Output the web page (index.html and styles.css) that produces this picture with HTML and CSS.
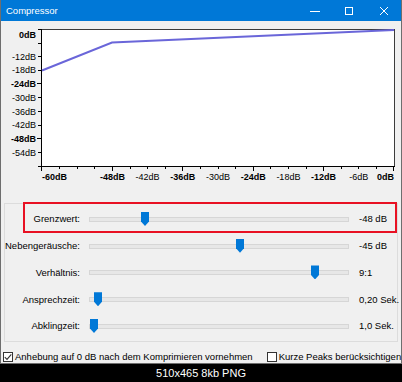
FILE: index.html
```html
<!DOCTYPE html>
<html>
<head>
<meta charset="utf-8">
<link rel="stylesheet" href="styles.css">
</head>
<body>
<div class="window">
  <div class="titlebar">
    <span class="title">Compressor</span>
    <div class="caption-btns">
      <span class="cbtn min"><svg width="10" height="10" viewBox="0 0 10 10"><path d="M0 5.5h10" stroke="#fff" stroke-width="1"/></svg></span>
      <span class="cbtn max"><svg width="10" height="10" viewBox="0 0 10 10"><rect x="1.5" y="1.5" width="7" height="7" fill="none" stroke="#fff" stroke-width="1"/></svg></span>
      <span class="cbtn close"><svg width="10" height="10" viewBox="0 0 10 10"><path d="M1 1L9 9M9 1L1 9" stroke="#fff" stroke-width="1"/></svg></span>
    </div>
  </div>

  <svg class="graph" width="400" height="169" viewBox="1 21 400 169">
    <rect x="41.5" y="29.5" width="353" height="137" fill="#fff" stroke="#3c3c3c" stroke-width="1"/>
    <path d="M41.5 29v138M41 166.5h354" stroke="#000" stroke-width="1"/>
    <path class="ticks" d="M38 29.5h3M38 43.5h3M38 56.5h3M38 70.5h3M37 83.5h4M38 97.5h3M38 111.5h3M38 125.5h3M37 138.5h4M38 152.5h3M38 166.5h3
      M41.5 167v4M59.5 167v2M77.5 167v2M94.5 167v2M112.5 167v4M130.5 167v2M147.5 167v2M165.5 167v2M182.5 167v4M200.5 167v2M218.5 167v2M235.5 167v2M253.5 167v4M270.5 167v2M288.5 167v2M306.5 167v2M323.5 167v4M341.5 167v2M358.5 167v2M376.5 167v2M393.5 167v4" stroke="#000" stroke-width="1"/>
    <polyline points="42,70.5 112,42.5 394,30" fill="none" stroke="#6a66d9" stroke-width="2"/>
    <g class="ylab">
      <text x="36" y="38.3" class="b">0dB</text>
      <text x="36" y="59.7">-12dB</text>
      <text x="36" y="73.4">-18dB</text>
      <text x="36" y="87.1" class="b">-24dB</text>
      <text x="36" y="100.8">-30dB</text>
      <text x="36" y="114.5">-36dB</text>
      <text x="36" y="128.2">-42dB</text>
      <text x="36" y="141.9" class="b">-48dB</text>
      <text x="36" y="155.6">-54dB</text>
    </g>
    <g class="xlab">
      <text x="42" y="179.5" class="b start">-60dB</text>
      <text x="112.4" y="179.5" class="b">-48dB</text>
      <text x="147.6" y="179.5">-42dB</text>
      <text x="182.8" y="179.5" class="b">-36dB</text>
      <text x="218" y="179.5">-30dB</text>
      <text x="253.2" y="179.5" class="b">-24dB</text>
      <text x="288.4" y="179.5">-18dB</text>
      <text x="323.6" y="179.5" class="b">-12dB</text>
      <text x="358.8" y="179.5">-6dB</text>
      <text x="394" y="179.5" class="b end">0dB</text>
    </g>
  </svg>

  <div class="group">
    <div class="row hl">
      <span class="lbl">Grenzwert:</span>
      <div class="slider"><span class="thumb" style="left:52px"></span></div>
      <span class="val">-48 dB</span>
    </div>
    <div class="row">
      <span class="lbl">Nebengeräusche:</span>
      <div class="slider"><span class="thumb" style="left:147px"></span></div>
      <span class="val">-45 dB</span>
    </div>
    <div class="row">
      <span class="lbl">Verhältnis:</span>
      <div class="slider"><span class="thumb" style="left:222px"></span></div>
      <span class="val">9:1</span>
    </div>
    <div class="row">
      <span class="lbl">Ansprechzeit:</span>
      <div class="slider"><span class="thumb" style="left:5px"></span></div>
      <span class="val">0,20 Sek.</span>
    </div>
    <div class="row">
      <span class="lbl">Abklingzeit:</span>
      <div class="slider"><span class="thumb" style="left:1px"></span></div>
      <span class="val">1,0 Sek.</span>
    </div>
  </div>

  <div class="checks">
    <label class="chk"><span class="box"><svg width="8" height="8" viewBox="0 0 8 8"><path d="M0.8 4.2L3 6.4L7.3 1.3" fill="none" stroke="#333" stroke-width="1.1"/></svg></span>Anhebung auf 0 dB nach dem Komprimieren vornehmen</label>
    <label class="chk"><span class="box"></span>Kurze Peaks berücksichtigen</label>
  </div>
</div>
<div class="caption">510x465 8kb PNG</div>
</body>
</html>
```

FILE: styles.css
```css
* { box-sizing: border-box; }
html, body { margin: 0; padding: 0; }
body {
  width: 402px;
  height: 382px;
  background: #000;
  overflow: hidden;
  font-family: "Liberation Sans", Arial, sans-serif;
}
.window {
  width: 402px;
  height: 364px;
  background: #f0f0f0;
  border-left: 1px solid #6e6e6e;
  border-right: 1px solid #6e6e6e;
  border-bottom: 1px solid #6e6e6e;
  display: flex;
  flex-direction: column;
  color: #000;
}
.titlebar {
  height: 21px;
  background: #0078d7;
  display: flex;
  align-items: center;
  color: #fff;
  flex: none;
}
.title {
  padding-left: 5px;
  font-size: 9.5px;
  flex: 1;
}
.caption-btns { display: flex; height: 100%; }
.cbtn {
  display: flex;
  align-items: center;
  justify-content: center;
  height: 100%;
}
.cbtn.min { width: 33px; }
.cbtn.max { width: 36px; }
.cbtn.close { width: 34px; }
.graph { display: block; flex: none; }
.graph text { font-family: "Liberation Sans", Arial, sans-serif; font-size: 9px; fill: #000; }
.graph text.b { font-weight: bold; }
.ylab text { text-anchor: end; }
.xlab text { text-anchor: middle; }
.xlab text.start { text-anchor: start; }
.xlab text.end { text-anchor: end; }

.group {
  margin: 13px 3px 0 3px;
  height: 139px;
  border: 1px solid #dcdcdc;
  padding-top: 1.5px;
  flex: none;
}
.row {
  position: relative;
  height: 26.75px;
  display: grid;
  grid-template-columns: 75px 260px 1fr;
  column-gap: 9px;
  align-items: center;
  font-size: 9.5px;
}
.row.hl::before {
  content: "";
  position: absolute;
  left: 18px;
  right: 0;
  top: -4px;
  bottom: -1px;
  border: 2px solid #e81123;
}
.lbl { text-align: right; white-space: nowrap; }
.val { padding-left: 1px; white-space: nowrap; }
.slider {
  position: relative;
  height: 14px;
}
.slider::before {
  content: "";
  position: absolute;
  left: 0;
  right: 0;
  top: 5px;
  height: 3px;
  background: #e7e7e7;
  border: 1px solid #d6d6d6;
}
.thumb {
  position: absolute;
  top: 0;
  width: 8px;
  height: 14px;
  background: #0078d7;
  clip-path: polygon(0 0, 100% 0, 100% 68%, 50% 100%, 0 68%);
}
.checks {
  flex: 1;
  display: flex;
  align-items: center;
  padding: 8px 0 0 2px;
  font-size: 9.5px;
}
.chk {
  display: flex;
  align-items: center;
  white-space: nowrap;
}
.chk + .chk { margin-left: 14px; }
.box {
  width: 10px;
  height: 10px;
  border: 1px solid #333;
  background: #fff;
  margin-right: 2px;
  display: flex;
  align-items: center;
  justify-content: center;
}
.caption {
  height: 18px;
  display: flex;
  align-items: center;
  justify-content: center;
  color: #fff;
  font-size: 11px;
}
```
